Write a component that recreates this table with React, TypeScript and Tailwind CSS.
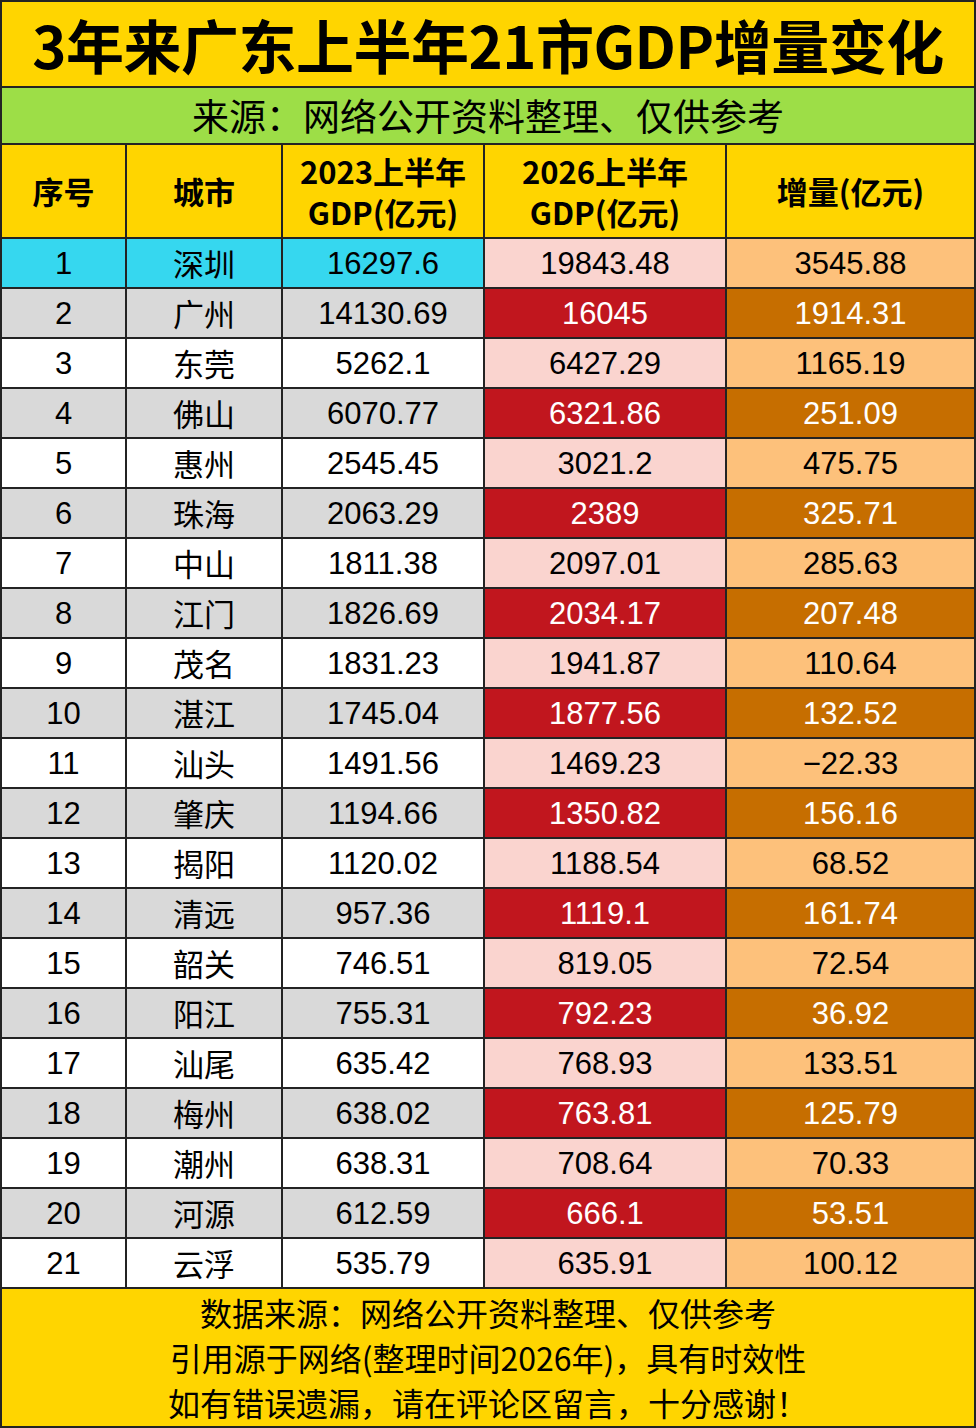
import React from 'react'

// ── Data ──────────────────────────────────────────────────────────────────────

type Row = [string, string, string, string]

const rows: Row[] = [
  ['深圳', '16297.6', '19843.48', '3545.88'],
  ['广州', '14130.69', '16045', '1914.31'],
  ['东莞', '5262.1', '6427.29', '1165.19'],
  ['佛山', '6070.77', '6321.86', '251.09'],
  ['惠州', '2545.45', '3021.2', '475.75'],
  ['珠海', '2063.29', '2389', '325.71'],
  ['中山', '1811.38', '2097.01', '285.63'],
  ['江门', '1826.69', '2034.17', '207.48'],
  ['茂名', '1831.23', '1941.87', '110.64'],
  ['湛江', '1745.04', '1877.56', '132.52'],
  ['汕头', '1491.56', '1469.23', '−22.33'],
  ['肇庆', '1194.66', '1350.82', '156.16'],
  ['揭阳', '1120.02', '1188.54', '68.52'],
  ['清远', '957.36', '1119.1', '161.74'],
  ['韶关', '746.51', '819.05', '72.54'],
  ['阳江', '755.31', '792.23', '36.92'],
  ['汕尾', '635.42', '768.93', '133.51'],
  ['梅州', '638.02', '763.81', '125.79'],
  ['潮州', '638.31', '708.64', '70.33'],
  ['河源', '612.59', '666.1', '53.51'],
  ['云浮', '535.79', '635.91', '100.12'],
]

const cjk = "font-['Noto_Sans_CJK_SC',sans-serif]"
const num = "font-['Liberation_Sans','Noto_Sans_CJK_SC',sans-serif] pt-[3px]"

// ── Component ─────────────────────────────────────────────────────────────────

export default function App() {
  return (
    <div className={`w-[976px] h-[1428px] bg-[#232323] p-[2px] flex flex-col gap-[2px] text-black ${cjk}`}>
      {/* 标题 */}
      <div className="h-[84px] shrink-0 bg-[#FFD500] flex items-center justify-center">
        <h1 className="text-[58px] font-bold leading-none tracking-[-0.5px]">3年来广东上半年21市GDP增量变化</h1>
      </div>

      {/* 来源 */}
      <div className="h-[55px] shrink-0 bg-[#9DDE47] flex items-center justify-center">
        <p className="text-[37px] leading-none">来源：网络公开资料整理、仅供参考</p>
      </div>

      {/* 表格 */}
      <div className="grid grid-cols-[123px_154px_200px_240px_247px] grid-rows-[92px_repeat(21,48px)] gap-[2px]">
        <div className="bg-[#FFD500] flex items-center justify-center text-[31px] font-bold">序号</div>
        <div className="bg-[#FFD500] flex items-center justify-center text-[31px] font-bold">城市</div>
        <div className="bg-[#FFD500] flex flex-col items-center justify-center text-[31px] font-bold leading-[41px]">
          <span>2023上半年</span>
          <span>GDP(亿元)</span>
        </div>
        <div className="bg-[#FFD500] flex flex-col items-center justify-center text-[31px] font-bold leading-[41px]">
          <span>2026上半年</span>
          <span>GDP(亿元)</span>
        </div>
        <div className="bg-[#FFD500] flex items-center justify-center text-[31px] font-bold">增量(亿元)</div>

        {rows.map(([city, a, b, d], i) => {
          const even = i % 2 === 1
          const first = i === 0
          const left = first ? 'bg-[#36D7EF]' : even ? 'bg-[#D9D9D9]' : 'bg-white'
          const mid = even ? 'bg-[#C1161E] text-white' : 'bg-[#FAD4CF]'
          const right = even ? 'bg-[#C66E00] text-white' : 'bg-[#FDC17B]'
          return (
            <React.Fragment key={city}>
              <div className={`${left} ${num} flex items-center justify-center text-[31px]`}>{i + 1}</div>
              <div className={`${left} flex items-center justify-center text-[31px]`}>{city}</div>
              <div className={`${left} ${num} flex items-center justify-center text-[31px]`}>{a}</div>
              <div className={`${mid} ${num} flex items-center justify-center text-[31px]`}>{b}</div>
              <div className={`${right} ${num} flex items-center justify-center text-[31px]`}>{d}</div>
            </React.Fragment>
          )
        })}
      </div>

      {/* 底部说明 */}
      <div className="flex-1 bg-[#FFD500] flex flex-col items-center justify-center text-[32px] leading-[45px]">
        <p>数据来源：网络公开资料整理、仅供参考</p>
        <p>引用源于网络(整理时间2026年)，具有时效性</p>
        <p>如有错误遗漏，请在评论区留言，十分感谢！</p>
      </div>
    </div>
  )
}
